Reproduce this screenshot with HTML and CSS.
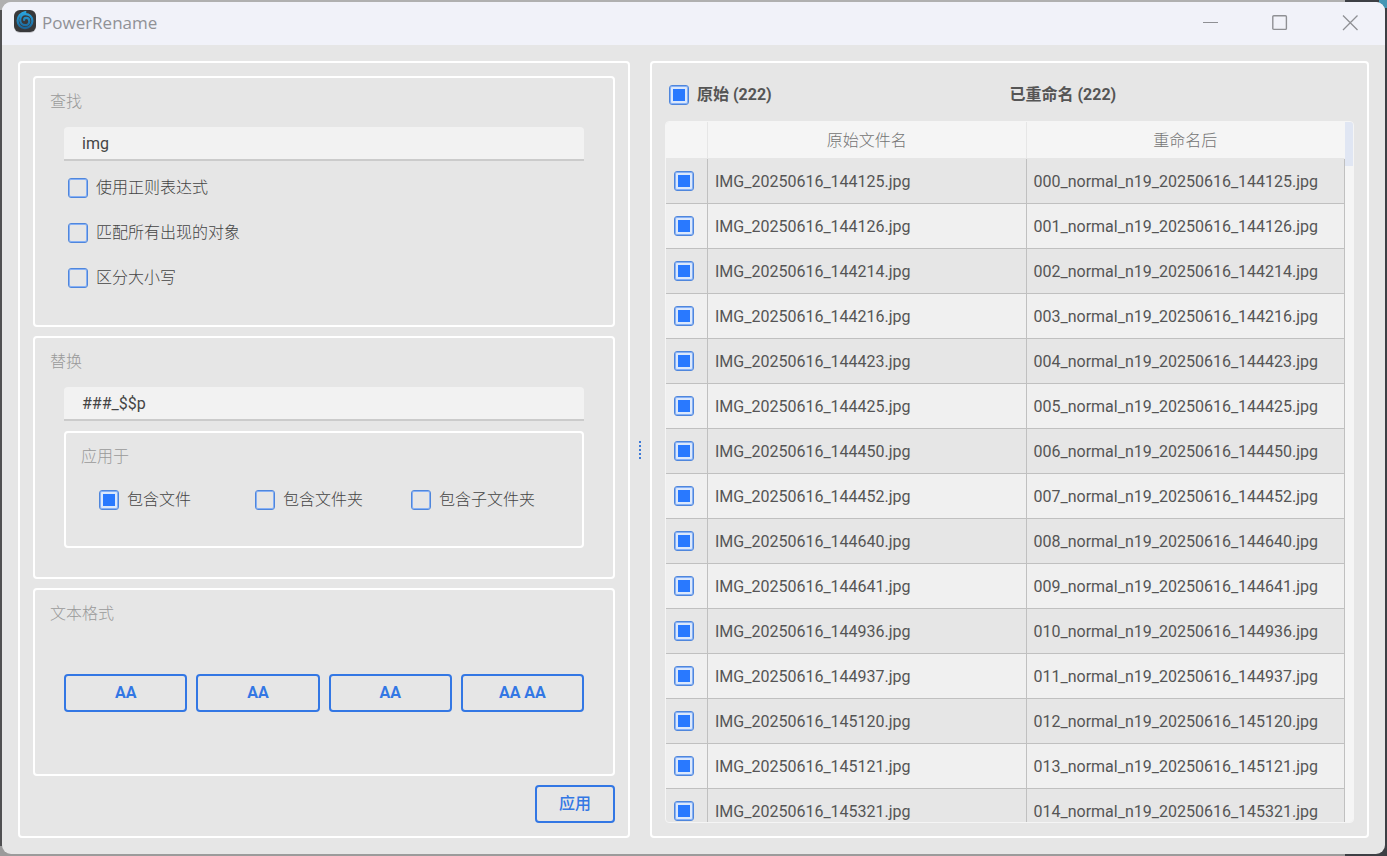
FILE: index.html
```html
<!DOCTYPE html>
<html lang="zh-CN">
<head>
<meta charset="utf-8">
<title>PowerRename</title>
<link rel="stylesheet" href="styles.css">
</head>
<body>
<div class="window">
  <header class="titlebar">
    <svg class="app-icon" width="24" height="26" viewBox="0 0 24 26" aria-hidden="true">
      <defs><linearGradient id="blue" x1="0" y1="0" x2="0" y2="1"><stop offset="0" stop-color="#2aa6e2"/><stop offset="1" stop-color="#1a6498"/></linearGradient></defs>
      <rect x="1" y="2" width="22" height="22" rx="6" fill="#c4c5ca"/>
      <rect x="1" y="1" width="22" height="22" rx="6" fill="#38393b"/>
      <path d="M12.400 3.400C8 4.200 4.600 7.600 4.600 12.200c0 4.200 3.300 7.400 7.400 7.400s7.400-3.200 7.400-7.300-3.200-6.700-6.800-6.700-5.400 2.800-5.400 5.800 2.200 5.200 4.900 5.200 4.200-2 4.200-4-1.500-3.300-3.200-3.300-2 1-2 2.200" transform="translate(0 -.4)" fill="none" stroke="url(#blue)" stroke-width="2.200" stroke-linecap="round"/>
    </svg>
    <h1 class="app-title">PowerRename</h1>
    <div class="controls">
      <button type="button" class="control" aria-label="最小化"><svg width="16" height="16" viewBox="0 0 16 16"><path d="M1 7.500h15"/></svg></button>
      <button type="button" class="control" aria-label="最大化"><svg width="16" height="16" viewBox="0 0 16 16"><rect x=".8" y=".8" width="13.600" height="13.600" rx="1" stroke-width="1.400"/></svg></button>
      <button type="button" class="control" aria-label="关闭"><svg width="16" height="16" viewBox="0 0 16 16"><path d="M1 .5l14.500 14.500M15.500.5 1 15" stroke-width="1.300"/></svg></button>
    </div>
  </header>

  <main class="content">
    <form class="panel options">
      <section class="group group-find" aria-labelledby="t-find">
        <h2 class="group-title" id="t-find">查找</h2>
        <div class="group-body">
          <input class="field" type="text" value="img" aria-labelledby="t-find">
          <div class="checks">
            <label class="check"><input type="checkbox">使用正则表达式</label>
            <label class="check"><input type="checkbox">匹配所有出现的对象</label>
            <label class="check"><input type="checkbox">区分大小写</label>
          </div>
        </div>
      </section>

      <section class="group group-replace" aria-labelledby="t-replace">
        <h2 class="group-title" id="t-replace">替换</h2>
        <div class="group-body">
          <input class="field" type="text" value="###_$$p" aria-labelledby="t-replace">
          <section class="group subgroup" aria-labelledby="t-apply">
            <h3 class="group-title" id="t-apply">应用于</h3>
            <div class="targets">
              <label class="check"><input type="checkbox" checked>包含文件</label>
              <label class="check"><input type="checkbox">包含文件夹</label>
              <label class="check"><input type="checkbox">包含子文件夹</label>
            </div>
          </section>
        </div>
      </section>

      <section class="group group-format" aria-labelledby="t-format">
        <h2 class="group-title" id="t-format">文本格式</h2>
        <div class="group-body formats">
          <button type="button" class="btn">AA</button>
          <button type="button" class="btn">AA</button>
          <button type="button" class="btn">AA</button>
          <button type="button" class="btn">AA AA</button>
        </div>
      </section>

      <button type="button" class="btn apply">应用</button>
    </form>

    <div class="splitter" role="separator" aria-orientation="vertical">
      <svg width="2" height="18" viewBox="0 0 2 18"><path d="M1 0v18" stroke="#3f7ad6" stroke-width="2" stroke-dasharray="2"/></svg>
    </div>

    <section class="panel preview">
      <div class="summary">
        <label class="check"><input type="checkbox" checked>原始 (222)</label>
        <span>已重命名 (222)</span>
      </div>
      <div class="table-box">
        <div class="table-view">
          <table class="files">
            <colgroup><col class="col-check"><col><col></colgroup>
            <thead><tr><th></th><th>原始文件名</th><th>重命名后</th></tr></thead>
            <tbody>
              <tr><td><input type="checkbox" checked aria-label="000"></td><td>IMG_20250616_144125.jpg</td><td>000_normal_n19_20250616_144125.jpg</td></tr>
              <tr><td><input type="checkbox" checked aria-label="001"></td><td>IMG_20250616_144126.jpg</td><td>001_normal_n19_20250616_144126.jpg</td></tr>
              <tr><td><input type="checkbox" checked aria-label="002"></td><td>IMG_20250616_144214.jpg</td><td>002_normal_n19_20250616_144214.jpg</td></tr>
              <tr><td><input type="checkbox" checked aria-label="003"></td><td>IMG_20250616_144216.jpg</td><td>003_normal_n19_20250616_144216.jpg</td></tr>
              <tr><td><input type="checkbox" checked aria-label="004"></td><td>IMG_20250616_144423.jpg</td><td>004_normal_n19_20250616_144423.jpg</td></tr>
              <tr><td><input type="checkbox" checked aria-label="005"></td><td>IMG_20250616_144425.jpg</td><td>005_normal_n19_20250616_144425.jpg</td></tr>
              <tr><td><input type="checkbox" checked aria-label="006"></td><td>IMG_20250616_144450.jpg</td><td>006_normal_n19_20250616_144450.jpg</td></tr>
              <tr><td><input type="checkbox" checked aria-label="007"></td><td>IMG_20250616_144452.jpg</td><td>007_normal_n19_20250616_144452.jpg</td></tr>
              <tr><td><input type="checkbox" checked aria-label="008"></td><td>IMG_20250616_144640.jpg</td><td>008_normal_n19_20250616_144640.jpg</td></tr>
              <tr><td><input type="checkbox" checked aria-label="009"></td><td>IMG_20250616_144641.jpg</td><td>009_normal_n19_20250616_144641.jpg</td></tr>
              <tr><td><input type="checkbox" checked aria-label="010"></td><td>IMG_20250616_144936.jpg</td><td>010_normal_n19_20250616_144936.jpg</td></tr>
              <tr><td><input type="checkbox" checked aria-label="011"></td><td>IMG_20250616_144937.jpg</td><td>011_normal_n19_20250616_144937.jpg</td></tr>
              <tr><td><input type="checkbox" checked aria-label="012"></td><td>IMG_20250616_145120.jpg</td><td>012_normal_n19_20250616_145120.jpg</td></tr>
              <tr><td><input type="checkbox" checked aria-label="013"></td><td>IMG_20250616_145121.jpg</td><td>013_normal_n19_20250616_145121.jpg</td></tr>
              <tr><td><input type="checkbox" checked aria-label="014"></td><td>IMG_20250616_145321.jpg</td><td>014_normal_n19_20250616_145321.jpg</td></tr>
            </tbody>
          </table>
        </div>
        <div class="scrollbar"><div class="thumb"></div></div>
      </div>
    </section>
  </main>
</div>
</body>
</html>
```

FILE: styles.css
```css
* { box-sizing: border-box; }

body {
  margin: 0;
  height: 100vh;
  padding: 2px;
  color: #555;
  font: 16px/20px Roboto, "Noto Sans CJK SC", sans-serif;
  /* strips of the desktop that show round the window */
  background:
    linear-gradient(#4596b4, #4596b4) right top / 8px 8px no-repeat,
    linear-gradient(#3d3f44, #3d3f44) right top / 42px 100% no-repeat,
    linear-gradient(#505052, #505052) left 10px / 2px calc(100% - 20px) no-repeat,
    linear-gradient(#b0b0b0, #b0b0b0) left top / 100% 50% no-repeat,
    #9b9b9b;
}

.window {
  height: 100%;
  display: flex;
  flex-direction: column;
  overflow: hidden;
  border-radius: 9px;
  background: #e6e6e6;
}

/* Title bar */
.titlebar {
  flex: none;
  display: flex;
  align-items: center;
  height: 43px;
  padding: 0 0 2px 11px;
  gap: 5px;
  background: #f1f2f9;
}
.app-icon { align-self: flex-start; margin-top: 7px; }
.app-title {
  margin: 0;
  flex: 1;
  color: #909196;
  font: 400 17px/24px "Open Sans", sans-serif;
}
.controls { display: flex; align-self: stretch; }
.control {
  width: 70px;
  padding: 0;
  border: 0;
  display: grid;
  place-items: center;
  background: none;
}
.control svg { fill: none; stroke: #8f9094; stroke-width: 1; }

/* Layout */
.content {
  flex: 1;
  min-height: 0;
  display: grid;
  grid-template-columns: 612fr 20px 719fr;
  padding: 16px;
}
.panel {
  min-width: 0;
  min-height: 0;
  display: flex;
  flex-direction: column;
  padding: 13px;
  border: 2px solid #fff;
  border-radius: 4px;
}
.options { gap: 9px; }
.splitter { display: grid; place-items: center; }

/* Groups */
.group {
  display: flex;
  flex-direction: column;
  padding: 13px 15px;
  border: 2px solid #fff;
  border-radius: 4px;
}
.group-find { flex: 221 0 0; }
.group-replace { flex: 213 0 0; }
.group-format { flex: 158 0 0; }
.group-title {
  margin: 0;
  color: #999;
  font-size: 16px;
  font-weight: 300;
  line-height: 22px;
}
.group-body { padding: 14px 14px 0; }
.subgroup {
  margin-top: 10px;
  height: 117px;
}
.targets {
  display: grid;
  grid-template-columns: repeat(3, 1fr);
  margin-top: 9px;
  padding-left: 18px;
}
.formats {
  flex: 1;
  display: grid;
  grid-template-columns: repeat(4, 1fr);
  align-items: center;
  gap: 9px;
  padding: 0 14px;
}

/* Controls */
.field {
  display: block;
  width: 100%;
  height: 34px;
  padding: 0 18px;
  border: 0;
  border-bottom: 2px solid #cbcbcb;
  border-radius: 4px 4px 0 0;
  outline: 0;
  color: #444;
  background: #f2f2f2;
  font: inherit;
}
.checks { padding: 4px 4px 0; }
.check {
  display: flex;
  align-items: center;
  gap: 8px;
  height: 45px;
  color: #444;
  font-weight: 300;
}
input[type="checkbox"] {
  appearance: none;
  flex: none;
  display: block;
  width: 20px;
  height: 20px;
  margin: 0;
  border: 1px solid #4f86dc;
  border-radius: 3px;
  box-shadow: inset 0 0 0 1px #86b0f5;
}
input[type="checkbox"]:checked {
  background: linear-gradient(#2979ff, #2979ff) center / 12px 12px no-repeat, #dce8fb;
}
.btn {
  height: 38px;
  padding: 0;
  border: 2px solid #3377e4;
  border-radius: 4px;
  color: #3377e4;
  background: none;
  font: 700 16px/20px Roboto, "Noto Sans CJK SC", sans-serif;
}
.apply {
  width: 80px;
  align-self: flex-end;
  font-weight: 500;
}

/* Preview */
.summary {
  display: grid;
  grid-template-columns: 1fr 1fr;
  align-items: center;
  height: 45px;
  padding-bottom: 8px;
  font-weight: 700;
}
.summary .check { height: 36px; padding-left: 4px; color: inherit; font-weight: 700; }
.table-box {
  flex: 1;
  min-height: 0;
  display: flex;
  overflow: hidden;
  border: 1px solid #f5f5f5;
  border-radius: 4px;
}
.table-view { flex: 1; overflow: hidden; }
.files {
  width: 100%;
  table-layout: fixed;
  border-collapse: separate;
  border-spacing: 0;
}
.col-check { width: 42px; }
.files th {
  height: 37px;
  padding: 2px 0 0;
  border-right: 1px solid #e6e6e6;
  border-bottom: 1px solid #e6e6e6;
  color: #737373;
  background: #f5f5f5;
  font-weight: 300;
}
.files th:last-child { border-right-color: #f5f5f5; }
.files td {
  height: 45px;
  padding: 2px 7px 0;
  border-right: 1px solid #c0c0c0;
  border-bottom: 1px solid #c0c0c0;
  white-space: nowrap;
}
.files td:first-child { padding: 0 8px; }
.files tbody tr:nth-child(even) { background: #f0f0f0; }
.scrollbar { width: 8px; background: #f5f5f5; }
.thumb { height: 44px; background: #e0e6f3; }
```
